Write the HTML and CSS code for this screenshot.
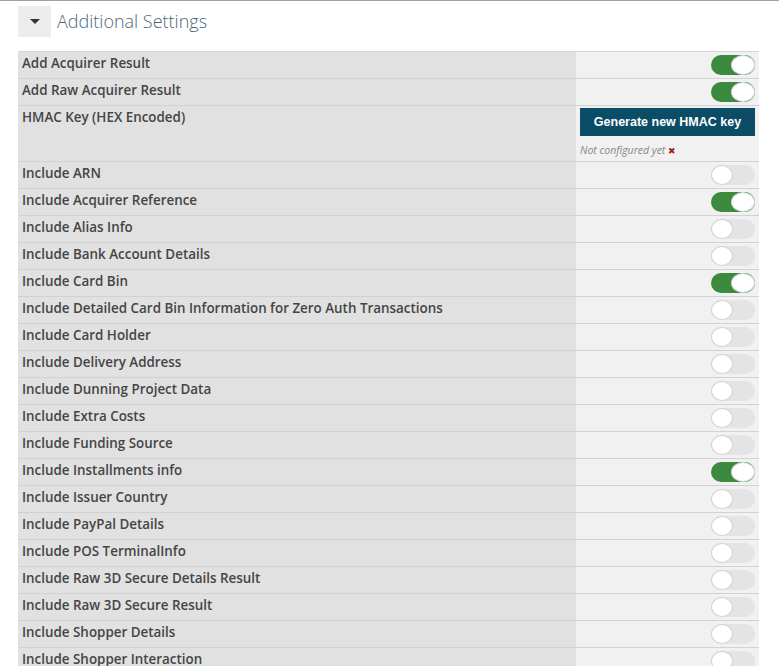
FILE: index.html
```html
<!DOCTYPE html>
<html>
<head>
<meta charset="utf-8">
<link rel="stylesheet" href="styles.css">
</head>
<body>
<div class="page">
  <div class="header">
    <div class="toggle-box"><span class="caret"></span></div>
    <h2 class="title">Additional Settings</h2>
  </div>
  <div class="table">
    <div class="row"><div class="label">Add Acquirer Result</div><div class="value"><span class="switch on"></span></div></div>
    <div class="row"><div class="label">Add Raw Acquirer Result</div><div class="value"><span class="switch on"></span></div></div>
    <div class="row hmac"><div class="label">HMAC Key (HEX Encoded)</div><div class="value col">
      <button class="btn">Generate new HMAC key</button>
      <div class="note">Not configured yet <span class="x">&#10006;</span></div>
    </div></div>
    <div class="row"><div class="label">Include ARN</div><div class="value"><span class="switch"></span></div></div>
    <div class="row"><div class="label">Include Acquirer Reference</div><div class="value"><span class="switch on"></span></div></div>
    <div class="row"><div class="label">Include Alias Info</div><div class="value"><span class="switch"></span></div></div>
    <div class="row"><div class="label">Include Bank Account Details</div><div class="value"><span class="switch"></span></div></div>
    <div class="row"><div class="label">Include Card Bin</div><div class="value"><span class="switch on"></span></div></div>
    <div class="row"><div class="label">Include Detailed Card Bin Information for Zero Auth Transactions</div><div class="value"><span class="switch"></span></div></div>
    <div class="row"><div class="label">Include Card Holder</div><div class="value"><span class="switch"></span></div></div>
    <div class="row"><div class="label">Include Delivery Address</div><div class="value"><span class="switch"></span></div></div>
    <div class="row"><div class="label">Include Dunning Project Data</div><div class="value"><span class="switch"></span></div></div>
    <div class="row"><div class="label">Include Extra Costs</div><div class="value"><span class="switch"></span></div></div>
    <div class="row"><div class="label">Include Funding Source</div><div class="value"><span class="switch"></span></div></div>
    <div class="row"><div class="label">Include Installments info</div><div class="value"><span class="switch on"></span></div></div>
    <div class="row"><div class="label">Include Issuer Country</div><div class="value"><span class="switch"></span></div></div>
    <div class="row"><div class="label">Include PayPal Details</div><div class="value"><span class="switch"></span></div></div>
    <div class="row"><div class="label">Include POS TerminalInfo</div><div class="value"><span class="switch"></span></div></div>
    <div class="row"><div class="label">Include Raw 3D Secure Details Result</div><div class="value"><span class="switch"></span></div></div>
    <div class="row"><div class="label">Include Raw 3D Secure Result</div><div class="value"><span class="switch"></span></div></div>
    <div class="row"><div class="label">Include Shopper Details</div><div class="value"><span class="switch"></span></div></div>
    <div class="row"><div class="label">Include Shopper Interaction</div><div class="value"><span class="switch"></span></div></div>
  </div>
</div>
</body>
</html>
```
FILE: styles.css
```css
html, body {
  margin: 0;
  padding: 0;
  background: #fff;
}
body {
  font-family: "Open Sans", "Liberation Sans", sans-serif;
  border-top: 1px solid #a0a0a0;
  overflow: hidden;
  height: 665px;
}
.page {
  padding: 0 20px 0 18px;
}
.header {
  display: flex;
  align-items: center;
  height: 40px;
  margin-bottom: 10px;
}
.toggle-box {
  width: 33px;
  height: 31px;
  background: #ececec;
  display: flex;
  align-items: center;
  justify-content: center;
}
.caret {
  width: 0;
  height: 0;
  border-left: 5px solid transparent;
  border-right: 5px solid transparent;
  border-top: 5px solid #333;
}
.title {
  margin: 0 0 0 6px;
  font-weight: 300;
  font-size: 18px;
  color: #48687a;
  line-height: 31px;
}
.table {
  border-top: 1px solid #d6d6d6;
}
.row {
  display: flex;
  height: 26px;
  border-bottom: 1px solid #d2d2d2;
}
.row.hmac {
  height: 55px;
}
.label {
  width: 554px;
  background: #e1e1e1;
  padding: 2px 0 0 4px;
  font-size: 13.4px;
  font-weight: 600;
  color: #454545;
  line-height: 18px;
  white-space: nowrap;
}
.value {
  flex: 1;
  background: #f1f1f1;
  display: flex;
  align-items: center;
  justify-content: flex-end;
  padding-right: 4px;
}
.value.col {
  flex-direction: column;
  align-items: stretch;
  justify-content: flex-start;
  padding: 2px 4px 0 4px;
}
.switch {
  position: relative;
  width: 44px;
  height: 20px;
  border-radius: 10px;
  background: #e4e4e4;
  box-sizing: border-box;
}
.switch::after {
  content: "";
  position: absolute;
  top: 0;
  left: 0;
  width: 22px;
  height: 20px;
  box-sizing: border-box;
  border-radius: 50%;
  background: #fff;
  border: 1px solid #d4d4d4;
}
.switch.on {
  background: #3b8a3e;
}
.switch.on::after {
  left: auto;
  right: 0;
  width: 24px;
}
.btn {
  height: 28px;
  background: #0b4d66;
  color: #fff;
  border: 0;
  font-family: "Liberation Sans", Arial, sans-serif;
  font-weight: bold;
  font-size: 12.5px;
  padding: 0;
}
.note {
  margin-top: 7px;
  font-size: 10.5px;
  font-style: italic;
  color: #888;
  line-height: 14px;
}
.x {
  color: #a31d1d;
  font-style: normal;
  font-size: 9px;
}
```
